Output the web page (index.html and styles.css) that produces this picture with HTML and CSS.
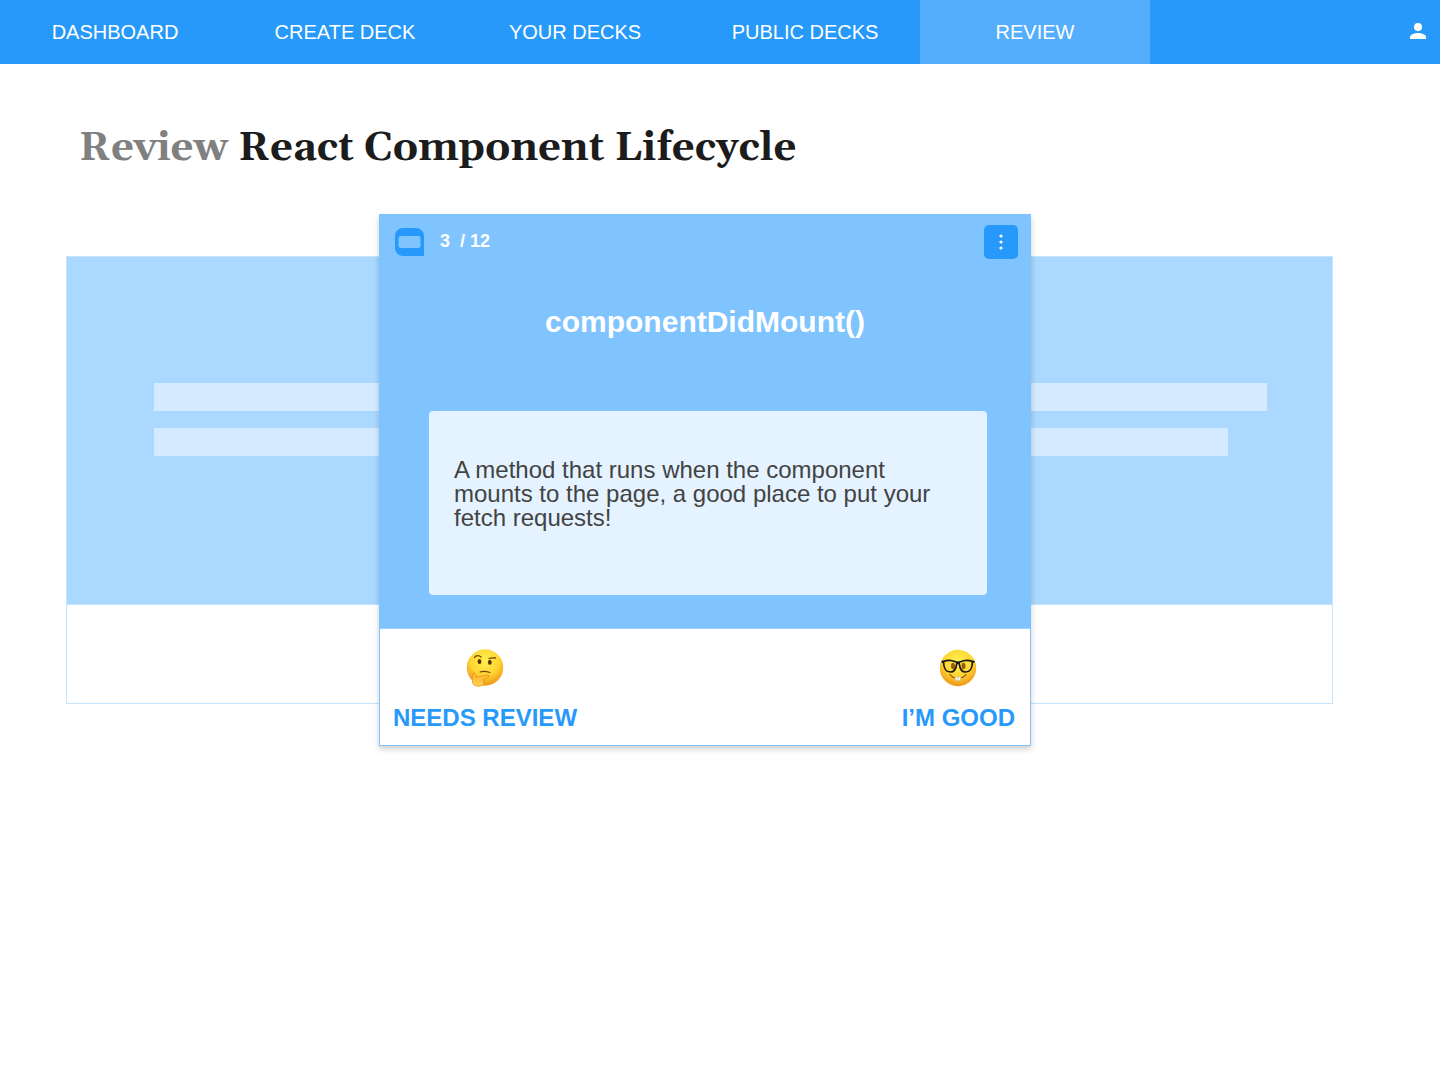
FILE: index.html
```html
<!DOCTYPE html>
<html lang="en">
<head>
<meta charset="utf-8">
<meta name="viewport" content="width=device-width, initial-scale=1">
<title>Review – React Component Lifecycle</title>
<link rel="stylesheet" href="styles.css">
</head>
<body>
<nav class="nav">
  <a class="nav-link" href="#dashboard">DASHBOARD</a>
  <a class="nav-link" href="#create">CREATE DECK</a>
  <a class="nav-link" href="#yours">YOUR DECKS</a>
  <a class="nav-link" href="#public">PUBLIC DECKS</a>
  <a class="nav-link nav-link-active" href="#review" aria-current="page">REVIEW</a>
  <a class="nav-user" href="#account" aria-label="Account">
    <svg width="16" height="16" viewBox="0 0 16 16" fill="#fff"><circle cx="8" cy="4" r="4"/><path d="M8 10c-2.700 0-8 1.300-8 4v2h16v-2c0-2.700-5.300-4-8-4z"/></svg>
  </a>
</nav>
<main class="page">
  <h1 class="title"><span class="title-mode">Review</span> React Component Lifecycle</h1>
  <div class="stage">
    <div class="side side-prev">
      <div class="side-face"><div class="bar"></div><div class="bar"></div></div>
    </div>
    <article class="card">
      <div class="card-face">
        <header class="card-head">
          <svg class="deck-icon" width="29" height="28" viewBox="0 0 29 28"><path fill="#2699fb" fill-rule="evenodd" d="M8 0h13a8 8 0 0 1 8 8v20H8a8 8 0 0 1-8-8V8a8 8 0 0 1 8-8zM6 8a2.500 2.500 0 0 0-2.500 2.500v7A2.500 2.500 0 0 0 6 20h17a2.500 2.500 0 0 0 2.500-2.500v-7A2.500 2.500 0 0 0 23 8z"/></svg>
          <p class="count"><span>3</span><span>/ 12</span></p>
          <button class="menu" type="button" aria-label="Card options">
            <svg width="4" height="16" viewBox="0 0 4 16" fill="#fff"><circle cx="2" cy="2" r="1.600"/><circle cx="2" cy="8" r="1.600"/><circle cx="2" cy="14" r="1.600"/></svg>
          </button>
        </header>
        <h2 class="term">componentDidMount()</h2>
        <p class="answer">A method that runs when the component mounts to the page, a good place to put your fetch requests!</p>
      </div>
      <div class="actions">
        <button class="action" type="button">
          <svg width="38" height="38" viewBox="0 0 38 38">
            <defs>
              <radialGradient id="face" cx="50%" cy="32%" r="70%"><stop offset="0" stop-color="#fff04d"/><stop offset=".55" stop-color="#ffd633"/><stop offset="1" stop-color="#ec9014"/></radialGradient>
              <linearGradient id="hand" x1="0" y1="0" x2="0" y2="1"><stop offset="0" stop-color="#ffb52b"/><stop offset="1" stop-color="#ffd052"/></linearGradient>
            </defs>
            <circle cx="19" cy="18.500" r="18.200" fill="url(#face)"/>
            <g fill="none" stroke="#75430a" stroke-linecap="round">
              <path stroke-width="1.300" d="M8.500 8.500c1.500-2.500 4.500-2.500 6.500-.5M23 9.500c2-.8 4-.9 6.500-.5"/>
              <path stroke-width="1.100" d="M14 23c3-1.200 6-.8 10 .5"/>
            </g>
            <g fill="#5b3108"><ellipse cx="13.500" cy="12.500" rx="1.900" ry="2.500"/><ellipse cx="23.800" cy="13.300" rx="1.900" ry="2.500"/></g>
            <path fill="url(#hand)" stroke="#e28a15" stroke-width=".7" d="M6.800 25c.4-1.800 2.300-1.500 2.600.4l.8 3.100c3.500-.8 7-2.300 11.300-2.500 2.200 0 2.300 1.600.4 2.300l-5 2.200c1.400.9 1.300 5-.8 6-2.300.9-6 .9-8-.4-2.200-1.500-2.100-7-1.300-11.100z"/>
          </svg>
          <span>NEEDS REVIEW</span>
        </button>
        <button class="action" type="button">
          <svg width="38" height="38" viewBox="0 0 38 38">
            <circle cx="19" cy="19" r="18.200" fill="url(#face)"/>
            <g fill="#9a5a0c"><ellipse cx="14" cy="17" rx="2" ry="3.200"/><ellipse cx="24.500" cy="17" rx="2" ry="3.200"/></g>
            <path fill="none" stroke="#171717" stroke-width="1.700" d="M4.500 12.500c3.500-1.500 8-1.500 12 .3 1.800.8 3.300.8 5 0 4-1.800 8.500-1.800 12-.3-.2 7-1.800 10.500-7 10.500-4.300 0-5.600-3-6.200-8.200-.8-.8-1.800-.8-2.600 0C17 20 15.700 23 11.500 23c-5.200 0-6.800-3.500-7-10.500z"/>
            <path fill="none" stroke="#171717" stroke-width="2" d="M2.500 13l2.500-.5M35.500 13l-2.500-.5"/>
            <path fill="none" stroke="#9a4b08" stroke-width="1.300" stroke-linecap="round" d="M11 25.500c3.500 5 12.500 5 16 0"/>
            <path fill="#fff" stroke="#c9b98e" stroke-width=".5" d="M16 28h3v3.500h-2.200zM19 28h3l-.8 3.500H19z"/>
          </svg>
          <span>I’M GOOD</span>
        </button>
      </div>
    </article>
    <div class="side side-next">
      <div class="side-face"><div class="bar"></div><div class="bar bar-short"></div></div>
    </div>
  </div>
</main>
</body>
</html>
```
FILE: styles.css
```css
* { box-sizing: border-box; }

body {
  margin: 0;
  background: #fff;
  font-family: Arial, "Liberation Sans", sans-serif;
}

h1, h2, p { margin: 0; }

button {
  border: 0;
  padding: 0;
  font: inherit;
  cursor: pointer;
}

svg { display: block; }

.nav {
  display: flex;
  height: 64px;
  background: #2699fb;
}

.nav-link {
  display: flex;
  align-items: center;
  justify-content: center;
  flex: 0 1 230px;
  color: #fff;
  font-size: 20px;
  text-decoration: none;
}

.nav-link-active { background: #55adfd; }

.nav-user {
  display: flex;
  align-items: center;
  margin-left: auto;
  padding: 0 14px 2px;
}

.page { padding: 60px 107px 56px 66px; }

.title {
  padding-left: 13px;
  color: #1c1c1c;
  font-family: Georgia, Gelasio, "Liberation Serif", serif;
  font-size: 40px;
  line-height: 50px;
}

.title-mode { color: #808080; }

.stage {
  display: grid;
  grid-template-columns: 313fr 652px 302fr;
  align-items: center;
  margin-top: 40px;
}

.side {
  height: 448px;
  border: 1px solid #c5e4ff;
}

.side-prev { border-right: 0; }
.side-next { border-left: 0; }

.side-face {
  display: flex;
  flex-direction: column;
  gap: 17px;
  height: 348px;
  padding-top: 126px;
  background: #abd8ff;
  border-bottom: 1px solid #c5e4ff;
}

.side-prev .side-face { padding-left: 87px; }
.side-next .side-face { padding-right: 65px; }

.bar {
  flex: none;
  height: 28px;
  background: #d4ebff;
}

.bar-short { margin-right: 39px; }

.card {
  z-index: 1;
  background: #fff;
  border: 1px solid #7fc4ff;
  box-shadow: 0 3px 6px rgba(0, 0, 0, 0.2);
}

.card-face {
  padding: 10px 43px 33px 49px;
  background: #7fc4ff;
  border-bottom: 1px solid #9fd2ff;
}

.card-head {
  display: flex;
  align-items: center;
  margin: 0 -31px 0 -34px;
}

.count {
  display: flex;
  gap: 10px;
  margin-left: 16px;
  padding-bottom: 2px;
  color: #fff;
  font-size: 18px;
  font-weight: bold;
  line-height: 20px;
}

.menu {
  display: grid;
  place-items: center;
  width: 34px;
  height: 34px;
  margin-left: auto;
  border-radius: 5px;
  background: #2699fb;
}

.term {
  margin-top: 45px;
  padding-right: 6px;
  color: #fff;
  font-size: 30px;
  line-height: 36px;
  text-align: center;
}

.answer {
  min-height: 184px;
  margin-top: 71px;
  padding: 47px 40px 47px 25px;
  border-radius: 4px;
  background: #e4f3ff;
  color: #434343;
  font-size: 24px;
  line-height: 24px;
}

.actions {
  display: flex;
  justify-content: space-between;
  padding: 20px 15px 13px 13px;
}

.action {
  display: flex;
  flex-direction: column;
  align-items: center;
  gap: 17px;
  background: none;
  color: #2699fb;
  font-size: 24px;
  font-weight: bold;
  line-height: 28px;
}
```
